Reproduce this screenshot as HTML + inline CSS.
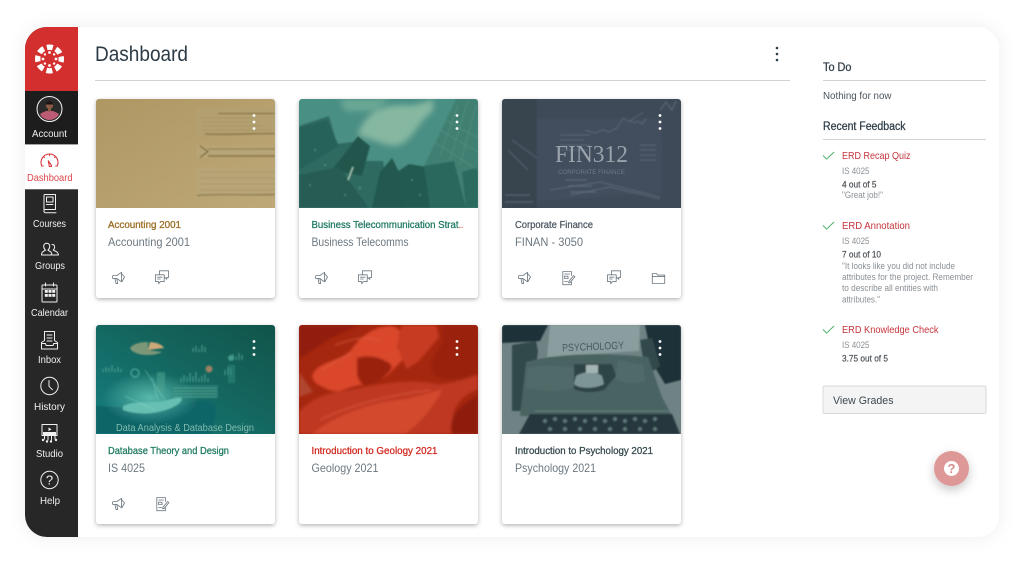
<!DOCTYPE html>
<html lang="en"><head><meta charset="utf-8"><title>Dashboard</title>
<style>
html,body{margin:0;padding:0;width:1024px;height:563px;overflow:hidden;background:#fff}
svg{display:block}
text{font-family:"Liberation Sans",Arial,sans-serif}
.nav{fill:#f0f0f0;font-size:10.5px}
.ti{font-size:10.5px;stroke-width:.28px}
.su{font-size:12px;fill:#6d7880}
.h{font-size:11.5px;fill:#2d3b45;stroke:#2d3b45;stroke-width:.25px}
.r{font-size:10.5px;fill:#c5343c}
.g{font-size:9px;fill:#8a9095}
.b{font-size:9px;fill:#4a5056;stroke:#4a5056;stroke-width:.18px}
.i{fill:none;stroke:#f0f0f0;stroke-width:1;stroke-linejoin:round;stroke-linecap:round}
.ci{fill:none;stroke:#6f7a82;stroke-width:.85;stroke-linejoin:round;stroke-linecap:round}
</style></head><body>
<svg width="1024" height="563" viewBox="0 0 1024 563" xmlns="http://www.w3.org/2000/svg">
<defs>
<filter id="fs" x="-5%" y="-5%" width="110%" height="110%"><feDropShadow dx="0" dy="0" stdDeviation="9" flood-color="#000" flood-opacity=".07"/></filter>
<filter id="cs" x="-10%" y="-10%" width="120%" height="120%"><feDropShadow dx="0" dy="1.5" stdDeviation="2" flood-color="#000" flood-opacity=".3"/></filter>
<filter id="fb" x="-60%" y="-60%" width="220%" height="220%"><feDropShadow dx="0" dy="4" stdDeviation="5" flood-color="#000" flood-opacity=".22"/></filter>
<filter id="bl"><feGaussianBlur stdDeviation=".8"/></filter>
<filter id="bl1"><feGaussianBlur stdDeviation="1.2"/></filter>
<filter id="bl2"><feGaussianBlur stdDeviation="3"/></filter>
<clipPath id="fc"><rect x="25" y="27" width="974" height="510" rx="22"/></clipPath>
<clipPath id="c1"><path d="M96 208V102a3 3 0 0 1 3-3H272a3 3 0 0 1 3 3V208Z"/></clipPath>
<clipPath id="c2"><path d="M299 208V102a3 3 0 0 1 3-3H475a3 3 0 0 1 3 3V208Z"/></clipPath>
<clipPath id="c3"><path d="M502 208V102a3 3 0 0 1 3-3H678a3 3 0 0 1 3 3V208Z"/></clipPath>
<clipPath id="c4"><path d="M96 434V328a3 3 0 0 1 3-3H272a3 3 0 0 1 3 3V434Z"/></clipPath>
<clipPath id="c5"><path d="M299 434V328a3 3 0 0 1 3-3H475a3 3 0 0 1 3 3V434Z"/></clipPath>
<clipPath id="c6"><path d="M502 434V328a3 3 0 0 1 3-3H678a3 3 0 0 1 3 3V434Z"/></clipPath>
<clipPath id="av"><circle cx="49.5" cy="109" r="11"/></clipPath>
<linearGradient id="t1" x1="0" x2="1" y1="0" y2="1"><stop offset="0" stop-color="#ae9763"/><stop offset="1" stop-color="#bea877"/></linearGradient>
<linearGradient id="t4" x1="0" x2="1" y1="1" y2="0"><stop offset="0" stop-color="#157f80"/><stop offset=".55" stop-color="#14665f"/><stop offset="1" stop-color="#11544a"/></linearGradient>
<radialGradient id="gl" cx=".5" cy=".5" r=".5"><stop offset="0" stop-color="#6fd0c0" stop-opacity=".75"/><stop offset="1" stop-color="#6fd0c0" stop-opacity="0"/></radialGradient>
<g id="mega" class="ci"><path d="M-5.5-2.500h3.500l4.500-3.200v9.500l-4.500-3.200h-3.500a.9.9 0 0 1-.9-.9v-1.300a.9.9 0 0 1 .9-.9Z"/><path d="M-4 .6l1 5h1.600l-.7-5M2.500-4.500L5.500-1 3 3.500"/></g>
<g id="chat" class="ci"><path d="M-6.500-2.200h8.700v6.800h-3.800l-1.700 2.100v-2.100h-3.200Z"/><path d="M-2.600-2.200v-4h9.200v6.600h-1.800v1.900l-1.900-1.900h-.3"/><path d="M-4.500 .2h4.500M-4.500 2h2.800"/></g>
<g id="assn" class="ci"><path d="M3.400-2.500v-4h-8.600v13.200h8.600v-2.800"/><path d="M-3.400-4h5M-3.400-1.800h3.400v2.300h-3.400ZM-3.400 3.500h3"/><path d="M1 3.200l4.600-5.600 1.300 1-4.600 5.700-1.700.5Z"/></g>
<g id="fold" class="ci"><path d="M-6.200 5.500v-10h4.200l1.200 1.600h7v8.400Z"/><path d="M-6.200-1.600H6.200"/></g>
<g id="kb" fill="#fff"><circle cy="-6.500" r="1.400"/><circle r="1.400"/><circle cy="6.500" r="1.400"/></g>
<g id="chk" fill="none" stroke="#4fb26b" stroke-width="1"><path d="M0 3.500l3.600 3.600L11 0"/></g>
</defs>

<rect width="1024" height="563" fill="#fff"/>
<rect x="25" y="27" width="974" height="510" rx="22" fill="#fff" filter="url(#fs)"/>

<!-- sidebar -->
<g clip-path="url(#fc)">
<rect x="25" y="27" width="53" height="510" fill="#272727"/>
<rect x="25" y="27" width="53" height="64" fill="#d42f2f"/>
<rect x="25" y="91" width="53" height="53" fill="#1d1d1d"/>
<rect x="25" y="144" width="53" height="45.500" fill="#fff"/>
<rect x="25" y="144" width="53" height=".9" fill="#9a9a9a"/>
<rect x="25" y="189" width="53" height="1" fill="#666"/>
</g>
<!-- logo -->
<g fill="#fff">
<circle cx="49.500" cy="59" r="11.800" fill="none" stroke="#fff" stroke-width="5.400" stroke-dasharray="6 3.268" stroke-dashoffset="3"/>
<circle cx="49.500" cy="52.500" r="1.400"/><circle cx="49.500" cy="65.500" r="1.400"/><circle cx="43" cy="59" r="1.400"/><circle cx="56" cy="59" r="1.400"/>
<circle cx="44.900" cy="54.400" r="1.200"/><circle cx="54.100" cy="54.400" r="1.200"/><circle cx="44.900" cy="63.600" r="1.200"/><circle cx="54.100" cy="63.600" r="1.200"/>
</g>
<!-- avatar -->
<circle cx="49.500" cy="109" r="12.500" fill="#2a2a2a" stroke="#f4f4f4" stroke-width="1"/>
<g clip-path="url(#av)"><rect x="38" y="98" width="23" height="22" fill="#2b2a2a"/>
<path d="M39.500 121l1-7.500 5.500-2.500h7l5.500 2.500 1 7.500Z" fill="#bc5c74"/>
<circle cx="49.500" cy="105.500" r="3.600" fill="#8a5a45"/><path d="M45.900 104.500a3.600 3.300 0 0 1 7.200 0Z" fill="#1d1412"/>
<rect x="48" y="108" width="3" height="3.500" fill="#8a5a45"/></g>
<!-- nav icons -->
<g fill="none" stroke="#d9363a" stroke-width="1.100" stroke-linecap="round">
<path d="M43.300 166h-1.500a8 8 0 0 1-.8-3.500a8.500 8.500 0 0 1 17 0a8 8 0 0 1-.8 3.500h-1.500"/>
<path d="M49.500 154v1.600M43.500 156.500l1 1M55.500 156.500l-1 1"/>
<path d="M48.200 160.500l3.200 4.800v1.200h-2l-1.200-6Z"/></g>
<text x="27" y="181" textLength="45.500" lengthAdjust="spacingAndGlyphs" font-size="10.500" fill="#e0444a">Dashboard</text>
<text class="nav" x="32" y="137" textLength="35" lengthAdjust="spacingAndGlyphs">Account</text>
<g class="i">
<path d="M44 210v-14.500a1 1 0 0 1 1-1h10.500v15h-10a1.600 1.600 0 0 0 0 3.200h10.500"/><rect x="46.500" y="197" width="6.500" height="5"/><path d="M46.500 204.500h6.500"/>
<path d="M41.500 255c0-3 1.500-3.500 4-4.800c-3-3-2-7 1.200-7s4.200 4 1.200 7c2.500 1.300 4 1.800 4 4.800Z"/><path d="M52 244.500c2.800-.3 3.600 3.300 1.200 5.600c2 1 4.800 1.500 5.300 4.900h-6"/>
<rect x="42" y="285" width="15" height="17" rx=".6"/><path d="M42 289h15M45.500 283v3M53.500 283v3"/>
<path d="M41.500 349v-6.500l3-2v-9h10v9l3 2v6.500ZM41.500 343.500h4l.6 2h7l.6-2h4M47 335h5M47 338h5M47 341h5"/>
<circle cx="49.500" cy="386" r="8.700"/><path d="M49 380.500v5.800l3.500 3.500"/>
<rect x="42" y="424.500" width="15" height="11"/><path d="M44.500 436v3M48 436v4M51.500 436v4M55 436v3"/>
<circle cx="49.500" cy="480" r="8.700"/>
</g>
<g fill="#f0f0f0"><path d="M48.500 427.500l3 1.800-3 1.800Z"/><rect x="43" y="432" width="13" height="3"/>
<circle cx="43" cy="440" r="1.200"/><circle cx="47" cy="441.500" r="1.200"/><circle cx="51" cy="441.500" r="1.200"/><circle cx="56" cy="440" r="1.200"/>
<rect x="44.800" y="290" width="3" height="2.800"/><rect x="48.500" y="290" width="3" height="2.800"/><rect x="52.200" y="290" width="3" height="2.800"/>
<rect x="44.800" y="294" width="3" height="2.800"/><rect x="48.500" y="294" width="3" height="2.800"/><rect x="52.200" y="294" width="3" height="2.800"/></g>
<text x="49.500" y="484.500" text-anchor="middle" font-size="13" fill="#f0f0f0">?</text>
<text class="nav" x="33" y="227" textLength="33" lengthAdjust="spacingAndGlyphs">Courses</text>
<text class="nav" x="35" y="269" textLength="30" lengthAdjust="spacingAndGlyphs">Groups</text>
<text class="nav" x="31" y="316" textLength="37" lengthAdjust="spacingAndGlyphs">Calendar</text>
<text class="nav" x="38" y="363" textLength="23" lengthAdjust="spacingAndGlyphs">Inbox</text>
<text class="nav" x="34" y="410" textLength="31" lengthAdjust="spacingAndGlyphs">History</text>
<text class="nav" x="36" y="457" textLength="27" lengthAdjust="spacingAndGlyphs">Studio</text>
<text class="nav" x="40" y="504" textLength="20" lengthAdjust="spacingAndGlyphs">Help</text>

<!-- header -->
<text x="95" y="61" font-size="21" fill="#2d3b45" textLength="93" lengthAdjust="spacingAndGlyphs">Dashboard</text>
<g fill="#2d3b45"><circle cx="777" cy="48" r="1.300"/><circle cx="777" cy="54" r="1.300"/><circle cx="777" cy="60" r="1.300"/></g>
<rect x="95" y="80" width="695" height="1" fill="#cfd3d6"/>

<!-- cards base -->
<g fill="#fff" filter="url(#cs)">
<rect x="96" y="99" width="179" height="199" rx="3"/><rect x="299" y="99" width="179" height="199" rx="3"/><rect x="502" y="99" width="179" height="199" rx="3"/>
<rect x="96" y="325" width="179" height="199" rx="3"/><rect x="299" y="325" width="179" height="199" rx="3"/><rect x="502" y="325" width="179" height="199" rx="3"/>
</g>

<!-- image 1 -->
<g clip-path="url(#c1)"><rect x="96" y="99" width="179" height="109" fill="url(#t1)"/>
<g filter="url(#bl)">
<path d="M197 108h78v27l-78 1Z" fill="#b3a070"/>
<path d="M197 146h78v11l-78 1Z" fill="#b8a577"/>
<path d="M197 168h78v29l-78 1Z" fill="#b8a576"/>
<g fill="none" stroke="#7a6534"><path d="M218 113.500h57" stroke-width="1"/><path d="M205 134c25 1 45-.5 70-.5" stroke-width="1.100"/><path d="M200 146l8 5.500-8 6" stroke-width="1.200"/><path d="M208 149h67" stroke-width=".7"/><path d="M208 156h67" stroke-width="1.200"/><path d="M197 195.500c25-2 50 0 78-1" stroke-width=".9"/></g>
<g fill="none" stroke="#97855a" stroke-width=".5" opacity=".8"><path d="M202 118h50M202 122h55M202 126h60M202 130h70M200 172h75M200 178h75M200 184h75M200 190h75"/></g>
</g></g>

<!-- image 2 -->
<g clip-path="url(#c2)"><rect x="299" y="99" width="179" height="109" fill="#4a8f84"/>
<g filter="url(#bl)">
<g filter="url(#bl2)"><path d="M358 135c5-18 20-30 45-30c12 2 22-3 30-6v12c-14 10-18 24-30 32c-10 6-20 0-30-3Z" fill="#86b8a1"/><path d="M340 99h50l-15 12-30 0Z" fill="#6aa895"/></g>
<path d="M299 126l30-10 8 28 22-3 6 20 18 0 8 47H299Z" fill="#2d6b60"/>
<path d="M299 128l28-8 12 26-40 24Z" fill="#28625a" opacity=".9"/>
<path d="M332 170l26-34 12 10-8 30Z" fill="#21574d"/>
<path d="M299 175l40-8 30 41H299Z" fill="#265c53"/>
<path d="M372 208l8-36 12-14 8 16 6 34Z" fill="#20584d"/>
<path d="M403 208l-6-36 12-8 18 3 10 41Z" fill="#235a50"/>
<path d="M424 166l32-67h22v109h-38Z" fill="#3f8072"/>
<path d="M430 208l-6-42 30-5 12 47Z" fill="#2a685c"/>
<path d="M462 172l16-5v41h-12Z" fill="#2b6a5e"/>
<g stroke="#6ea394" stroke-width=".45" opacity=".7"><path d="M445 120l33 18M440 130l38 22M434 142l44 28M458 105l-18 50M468 100l-18 60M476 105l-16 60"/></g>
<g fill="#5f9a8b" opacity=".7"><circle cx="315" cy="150" r="1"/><circle cx="325" cy="165" r="1"/><circle cx="345" cy="195" r="1"/><circle cx="310" cy="185" r="1"/><circle cx="360" cy="188" r="1.200"/><circle cx="420" cy="195" r="1"/><circle cx="412" cy="180" r="1"/></g>
<path d="M348 180l5-13" stroke="#a0c4b2" stroke-width="1.500"/>
</g></g>

<!-- image 3 -->
<g clip-path="url(#c3)"><rect x="502" y="99" width="179" height="109" fill="#3e4a58"/>
<g filter="url(#bl)">
<rect x="502" y="99" width="35" height="109" fill="#39444f"/>
<path d="M537 118h125v75l-125 8Z" fill="#424e5d"/>
<g stroke="#616d7b" stroke-width=".7" fill="none"><path d="M512 140l25 18M508 150l20 20M560 135h30M560 140h24M560 145h30M560 150h28M630 120l4 3 4-2 4 3 4-5M585 130l10 3 8-3 6 2 8-4 6-10 6 4 8-6 6-3M640 145h16M640 150h16M640 155h16M640 160h16M550 190l50-8 60 15M570 195l40-8 50 12"/></g>
<g stroke="#6e7a88" stroke-width="1.300" opacity=".55" fill="none"><path d="M565 180h22M568 186h24M570 192h26M505 195h25M505 202h28M660 110l6-8 6 8 4-9"/></g>
</g>
<text x="555" y="162" style="font-family:'Liberation Serif',serif" font-size="24" fill="#9aa3ac" textLength="73" lengthAdjust="spacingAndGlyphs">FIN312</text>
<text x="558" y="174" font-size="6.500" fill="#6d7986" textLength="67" lengthAdjust="spacingAndGlyphs">CORPORATE FINANCE</text>
</g>

<!-- image 4 -->
<g clip-path="url(#c4)"><rect x="96" y="325" width="179" height="109" fill="url(#t4)"/>
<g filter="url(#bl)">
<path d="M96 434v-28c25 0 60 5 80 0c15-5 30-8 40 0c0 10-3 20-5 28Z" fill="#106568"/>
<ellipse cx="150" cy="398" rx="48" ry="26" fill="url(#gl)"/>
<path d="M123 406c15-7 30 0 55-9c6 0 5 5-3 9c-15 8-35 10-52 4Z" fill="#66bfb2"/>
<path d="M150 342a16 8.500 0 0 1 14 6l-16 2Z" fill="#cda97a"/><path d="M130 348a18 9 0 0 1 18-6v8l14 2a18 8 0 0 1-32-4Z" fill="#8ea07c" opacity=".85"/>
<g stroke="#5fb3a1" stroke-width="1" opacity=".8"><path d="M103 372v-3M106 372v-5M109 372v-4M112 372v-7M115 372v-3M118 372v-5M121 372v-3M181 382v-4M184 382v-7M187 382v-5M190 382v-9M193 382v-6M196 382v-10M199 382v-4M202 382v-6M205 382v-8M208 382v-4M225 375v-5M228 375v-8M231 375v-6M193 352v-4M196 352v-6M199 352v-3M202 352v-7M205 352v-5M230 360v-3M233 360v-6M236 360v-4M239 360v-7M242 360v-5"/></g>
<rect x="172" y="385" width="46" height="13" fill="#2b8478" opacity=".6"/><path d="M173 388h44M173 391h44M173 394h44M173 397h44" stroke="#7ac4b2" stroke-width=".45"/>
<rect x="157" y="372" width="8" height="20" fill="#4da38f" opacity=".55"/>
<circle cx="209" cy="369" r="3.500" fill="#c98b66" opacity=".75"/><circle cx="231" cy="358" r="3" fill="#4aa594" opacity=".8"/>
<circle cx="135" cy="373" r="4" fill="none" stroke="#5fb8aa"/>
<rect x="228" y="365" width="7" height="18" fill="#2b857b" opacity=".6"/>
<path d="M155 410l-30-14M165 400l-20-30M158 400l-6-22" stroke="#8fdccd" stroke-width=".9" opacity=".45"/>
</g>
<text x="116" y="431" font-size="10.500" fill="#84bcae" textLength="138" lengthAdjust="spacingAndGlyphs">Data Analysis &amp; Database Design</text>
</g>

<!-- image 5 -->
<g clip-path="url(#c5)"><rect x="299" y="325" width="179" height="109" fill="#a5270f"/>
<g filter="url(#bl1)">
<path d="M299 325h60l-30 14-30 20Z" fill="#921e09"/>
<path d="M314 372c8-12 26-10 37-22c8-12 22-23 38-24c12 0 14 10 10 15c-4 9 2 12 12 7c-4 9-14 17-22 26c-12 10-32 10-46 16c-10 4-18-2-26-6c-5-4 -6-8-3-12Z" fill="#da462a"/>
<path d="M402 325h34l3 12-20 24-12 8c-8-14-12-28-5-44Z" fill="#c63a20"/>
<path d="M357 358c14-4 24 0 32 5c8 5-4 13-12 19c-12 7-18 2-20-8Z" fill="#9a200b"/>
<path d="M441 325h37v48c-15 8-36 9-44 1c-8-10 3-20 7-29c3-8 0-14 0-20Z" fill="#9a200b"/>
<path d="M299 434v-22c12-14 30-20 50-22c30-6 60-12 88-6c15 0 30-6 41-9v14c-25 10-30 30-22 45Z" fill="#be3820"/>
<path d="M312 434c20-16 48-28 78-33c22-2 35-7 53-12c-8 15-20 32-38 45Z" fill="#d34a2e"/>
<path d="M452 434c-4-14 5-28 26-38v38Z" fill="#8e1c08"/>
<path d="M299 372l14 20-14 5Z" fill="#bb5f4c" opacity=".55"/>
<path d="M322 370c10-6 20-14 30-16M335 345c15-5 30-10 45-4M320 420c30-15 70-25 110-30" stroke="#e8684c" stroke-width="1.200" fill="none" opacity=".6"/>
</g></g>

<!-- image 6 -->
<g clip-path="url(#c6)"><rect x="502" y="325" width="179" height="109" fill="#6f8284"/>
<g filter="url(#bl)">
<path d="M645 325h36v55l-16 4-12-20Z" fill="#1f3337"/>
<path d="M502 325h46l-8 16-38 2Z" fill="#1f3337"/>
<path d="M550 325h90l-1 26-92 6Z" fill="#8b9e9f"/>
<path d="M512 345l24-4 2 10-4 30-10 30-12 0Z" fill="#33494b"/>
<path d="M640 340l12-2 8 28-14 10Z" fill="#33494b"/>
<path d="M526 362c30-8 70-10 122-5l14 40 10 19H520Z" fill="#496362"/>
<path d="M527 368c15-4 36-2 52 0l-3 18c-15 6-30 6-50 2Z" fill="#4f6a69"/>
<path d="M618 360l25 5 2 16c-10 4-20 2-30-2Z" fill="#4f6a69"/>
<path d="M574 364h28l10 0 4 12-12 14c-10 3-22 3-30-1Z" fill="#2f4547"/>
<path d="M576 376c8-5 20-5 26 0l2 8c-8 5-26 5-30 0Z" fill="#7d9597"/>
<rect x="586" y="365" width="12" height="8" fill="#a4b3b3"/>
<path d="M530 414h142l8 20H519Z" fill="#26393c"/>
<path d="M535 411h135" stroke="#65807e" stroke-width="1"/>
<g fill="#5c7474"><circle cx="545" cy="421" r="2"/><circle cx="555" cy="419" r="2"/><circle cx="565" cy="421" r="2"/><circle cx="575" cy="419" r="2"/><circle cx="585" cy="421" r="2"/><circle cx="595" cy="419" r="2"/><circle cx="605" cy="421" r="2"/><circle cx="615" cy="419" r="2"/><circle cx="625" cy="421" r="2"/><circle cx="635" cy="419" r="2"/><circle cx="645" cy="421" r="2"/><circle cx="655" cy="419" r="2"/><circle cx="550" cy="429" r="2"/><circle cx="565" cy="429" r="2"/><circle cx="580" cy="429" r="2"/><circle cx="595" cy="429" r="2"/><circle cx="610" cy="429" r="2"/><circle cx="625" cy="429" r="2"/><circle cx="640" cy="429" r="2"/><circle cx="655" cy="429" r="2"/></g>
</g>
<text x="562" y="350" font-size="10.500" fill="#465b5e" textLength="62" lengthAdjust="spacingAndGlyphs" transform="rotate(-2.500 593 346)">PSYCHOLOGY</text>
</g>

<!-- kebabs -->
<use href="#kb" x="254" y="122"/><use href="#kb" x="457" y="122"/><use href="#kb" x="660" y="122"/>
<use href="#kb" x="254" y="348"/><use href="#kb" x="457" y="348"/><use href="#kb" x="660" y="348"/>

<!-- card text -->
<text class="ti" x="108" y="228" fill="#9a6c22" stroke="#9a6c22" textLength="73" lengthAdjust="spacingAndGlyphs">Accounting 2001</text>
<text class="su" x="108" y="246" textLength="82" lengthAdjust="spacingAndGlyphs">Accounting 2001</text>
<text class="ti" x="311.500" y="228" fill="#1f7a62" stroke="#1f7a62" textLength="147" lengthAdjust="spacingAndGlyphs">Business Telecommunication Strat</text><text class="ti" x="458.500" y="228" fill="#d0281e" textLength="5" lengthAdjust="spacingAndGlyphs">...</text>
<text class="su" x="311.500" y="246" textLength="97" lengthAdjust="spacingAndGlyphs">Business Telecomms</text>
<text class="ti" x="515" y="228" fill="#4e5963" stroke="#4e5963" textLength="78" lengthAdjust="spacingAndGlyphs">Corporate Finance</text>
<text class="su" x="515" y="246" textLength="68" lengthAdjust="spacingAndGlyphs">FINAN - 3050</text>
<text class="ti" x="108" y="454" fill="#1f7a62" stroke="#1f7a62" textLength="121" lengthAdjust="spacingAndGlyphs">Database Theory and Design</text>
<text class="su" x="108" y="472" textLength="37" lengthAdjust="spacingAndGlyphs">IS 4025</text>
<text class="ti" x="311.500" y="454" fill="#d0281e" stroke="#d0281e" textLength="126" lengthAdjust="spacingAndGlyphs">Introduction to Geology 2021</text>
<text class="su" x="311.500" y="472" textLength="67" lengthAdjust="spacingAndGlyphs">Geology 2021</text>
<text class="ti" x="515" y="454" fill="#34494d" stroke="#34494d" textLength="138" lengthAdjust="spacingAndGlyphs">Introduction to Psychology 2021</text>
<text class="su" x="515" y="472" textLength="81" lengthAdjust="spacingAndGlyphs">Psychology 2021</text>

<!-- card icons -->
<use href="#mega" x="119" y="278"/><use href="#chat" x="162" y="277"/>
<use href="#mega" x="322" y="278"/><use href="#chat" x="365" y="277"/>
<use href="#mega" x="525" y="278"/><use href="#assn" x="568" y="278"/><use href="#chat" x="614" y="277"/><use href="#fold" x="658.500" y="278"/>
<use href="#mega" x="119" y="504"/><use href="#assn" x="162" y="504"/>

<!-- right column -->
<text class="h" x="823" y="71" textLength="28.500" lengthAdjust="spacingAndGlyphs">To Do</text>
<rect x="823" y="80" width="163" height="1" fill="#cfd3d6"/>
<text x="823" y="99" font-size="10" fill="#4b545b" textLength="68.500" lengthAdjust="spacingAndGlyphs">Nothing for now</text>
<text class="h" x="823" y="130" textLength="82.500" lengthAdjust="spacingAndGlyphs">Recent Feedback</text>
<rect x="823" y="139" width="163" height="1" fill="#cfd3d6"/>

<use href="#chk" x="823" y="152"/>
<text class="r" x="842" y="159" textLength="68.500" lengthAdjust="spacingAndGlyphs">ERD Recap Quiz</text>
<text class="g" x="842" y="174" textLength="27.500" lengthAdjust="spacingAndGlyphs">IS 4025</text>
<text class="b" x="842" y="187.500" textLength="34.500" lengthAdjust="spacingAndGlyphs">4 out of 5</text>
<text class="g" x="842" y="198" textLength="41" lengthAdjust="spacingAndGlyphs">"Great job!"</text>

<use href="#chk" x="823" y="222"/>
<text class="r" x="842" y="229" textLength="68" lengthAdjust="spacingAndGlyphs">ERD Annotation</text>
<text class="g" x="842" y="244" textLength="27.500" lengthAdjust="spacingAndGlyphs">IS 4025</text>
<text class="b" x="842" y="257.500" textLength="39" lengthAdjust="spacingAndGlyphs">7 out of 10</text>
<text class="g" x="842" y="269" textLength="113" lengthAdjust="spacingAndGlyphs">"It looks like you did not include</text>
<text class="g" x="842" y="280" textLength="131" lengthAdjust="spacingAndGlyphs">attributes for the project. Remember</text>
<text class="g" x="842" y="291" textLength="96" lengthAdjust="spacingAndGlyphs">to describe all entities with</text>
<text class="g" x="842" y="302.500" textLength="38" lengthAdjust="spacingAndGlyphs">attributes."</text>

<use href="#chk" x="823" y="326"/>
<text class="r" x="842" y="333" textLength="96.500" lengthAdjust="spacingAndGlyphs">ERD Knowledge Check</text>
<text class="g" x="842" y="348" textLength="27.500" lengthAdjust="spacingAndGlyphs">IS 4025</text>
<text class="b" x="842" y="361.500" textLength="46" lengthAdjust="spacingAndGlyphs">3.75 out of 5</text>

<rect x="823" y="386" width="163" height="27.500" rx="1.500" fill="#f4f4f4" stroke="#d7dadc" stroke-width="1"/>
<text x="833" y="404" font-size="11" fill="#3c4850" textLength="60.500" lengthAdjust="spacingAndGlyphs">View Grades</text>

<!-- help fab -->
<circle cx="951.500" cy="468.500" r="17.500" fill="#df9898" filter="url(#fb)"/>
<circle cx="951.500" cy="468.500" r="7.500" fill="#fff"/>
<text x="951.500" y="473" text-anchor="middle" font-size="13" font-weight="700" fill="#d88a8a">?</text>
</svg>
</body></html>
